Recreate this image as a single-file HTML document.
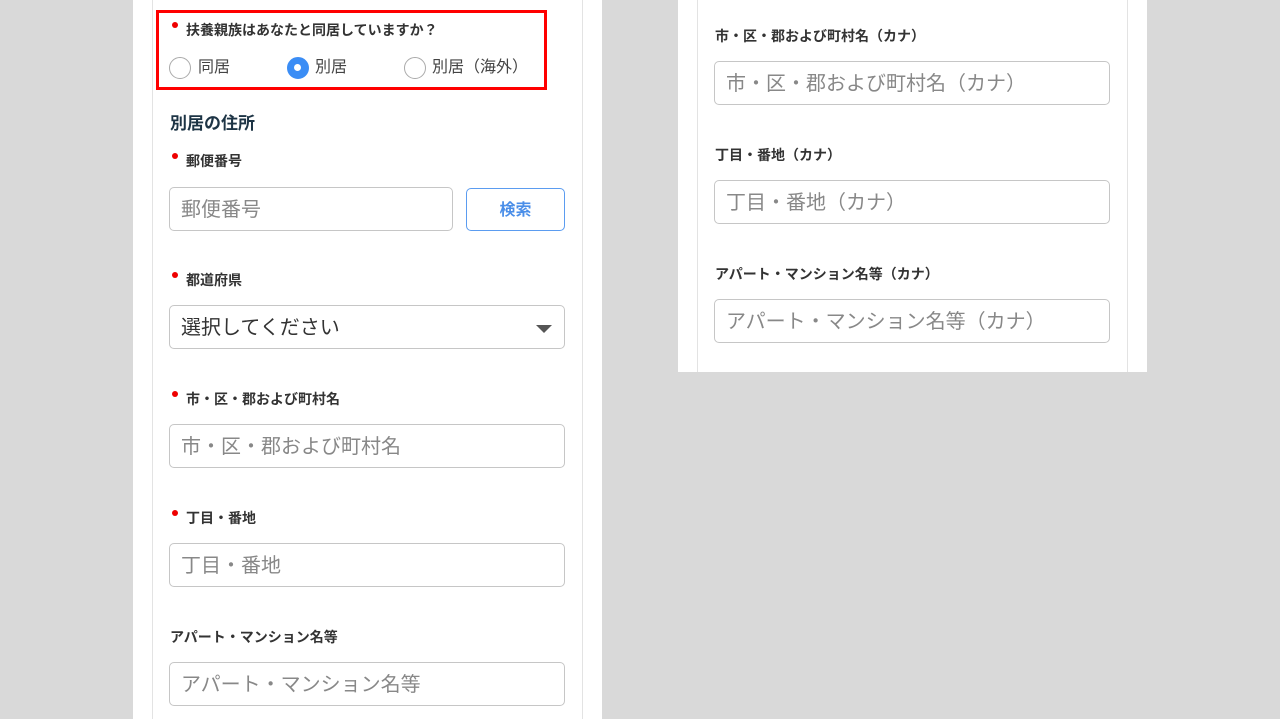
<!DOCTYPE html>
<html><head><meta charset="utf-8"><style>
*{box-sizing:border-box;margin:0;padding:0}
body{width:1280px;height:719px;background:#d9d9d9;position:relative;overflow:hidden;font-family:"Liberation Sans","Noto Sans CJK JP",sans-serif;color:#333}
.panel{position:absolute;background:#fff}
.line{position:absolute;top:0;width:1px;background:#e3e3e3}
.lbl{position:absolute;font-size:14px;font-weight:bold;color:#333;line-height:16px}
.req::before{content:"";position:absolute;left:-14px;top:0px;width:6px;height:6px;border-radius:50%;background:#e00}
.in{position:absolute;height:44px;border:1px solid #c6c6c6;border-radius:5px;font-size:20px;color:#888;padding-left:11px;line-height:44px;background:#fff}
.radio{position:absolute;top:57px;width:22px;height:22px;border-radius:50%;border:1.5px solid #aaa;background:#fff}
.rt{position:absolute;top:57px;font-size:16px;line-height:22px;color:#444}
</style></head><body>
<div class="panel" style="left:133px;top:0;width:469px;height:719px"></div>
<div class="line" style="left:152px;height:719px"></div>
<div class="line" style="left:582px;height:719px"></div>
<div class="panel" style="left:678px;top:0;width:469px;height:372px"></div>
<div class="line" style="left:697px;height:372px"></div>
<div class="line" style="left:1127px;height:372px"></div>

<div style="position:absolute;left:156px;top:10px;width:391px;height:80px;border:3px solid #f00"></div>
<div class="lbl req" style="left:186px;top:22px">扶養親族はあなたと同居していますか？</div>
<div class="radio" style="left:169px"></div><div class="rt" style="left:198px">同居</div>
<div class="radio" style="left:287px;background:#3b8df5;border-color:#3b8df5"><div style="position:absolute;left:6px;top:6px;width:7px;height:7px;border-radius:50%;background:#fff"></div></div><div class="rt" style="left:315px">別居</div>
<div class="radio" style="left:404px"></div><div class="rt" style="left:432px">別居（海外）</div>

<div class="lbl" style="left:170px;top:114px;font-size:17px;line-height:20px;color:#1d3445">別居の住所</div>
<div class="lbl req" style="left:186px;top:153px">郵便番号</div>
<div class="in" style="left:169px;top:187px;width:284px">郵便番号</div>
<div style="position:absolute;left:466px;top:188px;width:99px;height:43px;border:1px solid #5b9cf0;border-radius:5px;color:#4a8ee8;font-weight:bold;font-size:16px;text-align:center;line-height:44px">検索</div>

<div class="lbl req" style="left:186px;top:272px">都道府県</div>
<div class="in" style="left:169px;top:305px;width:396px;color:#333">選択してください<div style="position:absolute;right:12px;top:19px;border-left:8px solid transparent;border-right:8px solid transparent;border-top:8px solid #555"></div></div>

<div class="lbl req" style="left:186px;top:391px">市・区・郡および町村名</div>
<div class="in" style="left:169px;top:424px;width:396px">市・区・郡および町村名</div>
<div class="lbl req" style="left:186px;top:510px">丁目・番地</div>
<div class="in" style="left:169px;top:543px;width:396px">丁目・番地</div>
<div class="lbl" style="left:170px;top:629px">アパート・マンション名等</div>
<div class="in" style="left:169px;top:662px;width:396px">アパート・マンション名等</div>

<div class="lbl" style="left:715px;top:28px">市・区・郡および町村名（カナ）</div>
<div class="in" style="left:714px;top:61px;width:396px">市・区・郡および町村名（カナ）</div>
<div class="lbl" style="left:715px;top:147px">丁目・番地（カナ）</div>
<div class="in" style="left:714px;top:180px;width:396px">丁目・番地（カナ）</div>
<div class="lbl" style="left:715px;top:266px">アパート・マンション名等（カナ）</div>
<div class="in" style="left:714px;top:299px;width:396px">アパート・マンション名等（カナ）</div>
</body></html>
